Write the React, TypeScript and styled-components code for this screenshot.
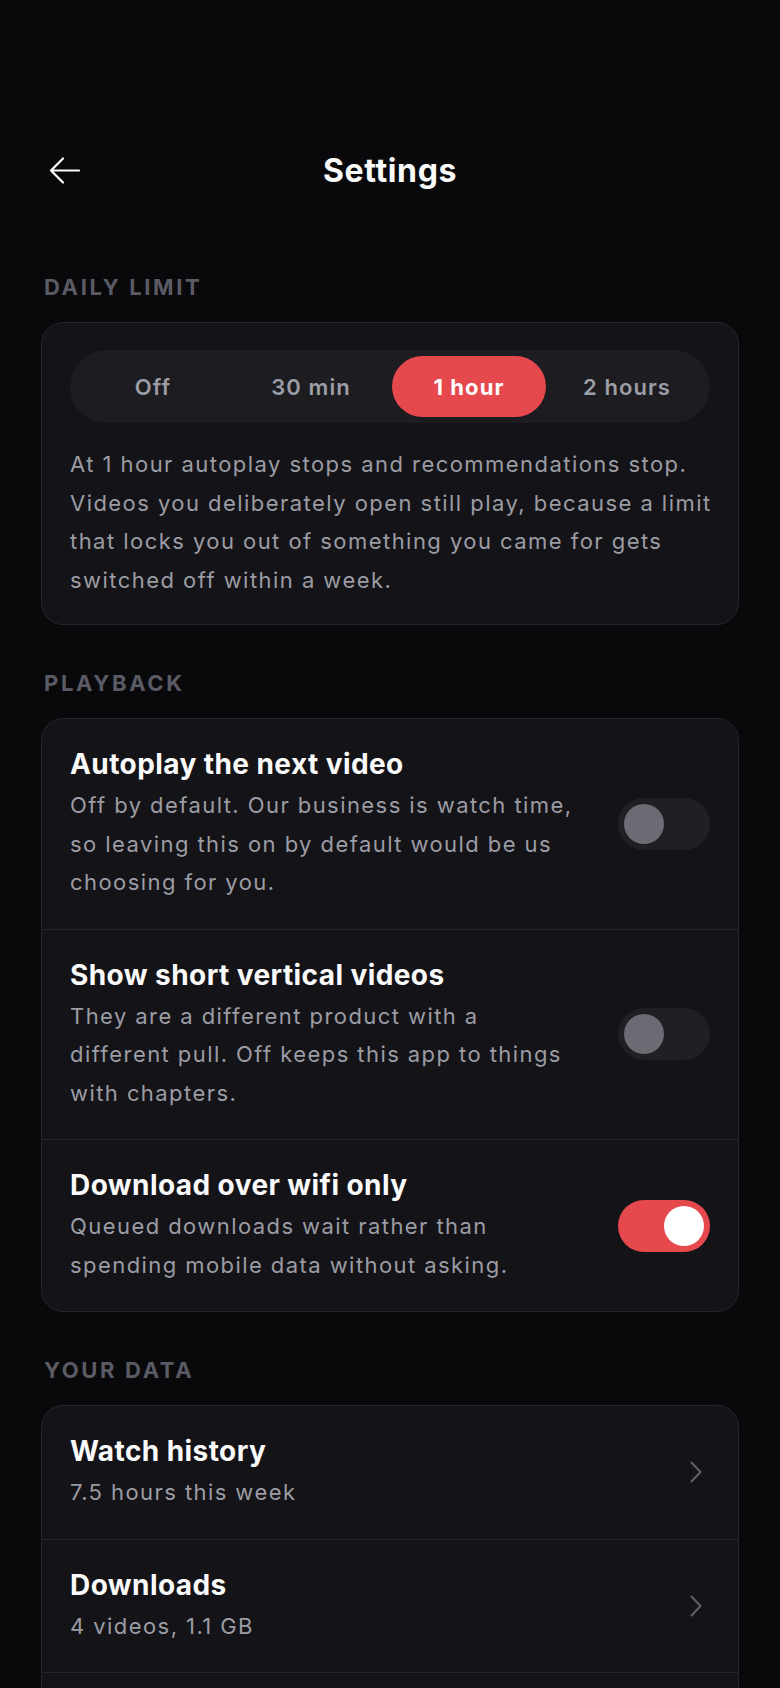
import React, { useState } from "react";
import styled, { createGlobalStyle } from "styled-components";

const GlobalStyle = createGlobalStyle`
  html, body {
    margin: 0;
    background: #09090b;
  }
  body {
    font-family: Inter, "Noto Sans", sans-serif;
    color: #fafafa;
    -webkit-font-smoothing: antialiased;
  }
  * { box-sizing: border-box; }
`;

const Page = styled.div`
  width: 780px;
  min-height: 1688px;
  padding: 140px 41px 40px;
`;

const Header = styled.header`
  display: grid;
  grid-template-columns: 1fr auto 1fr;
  align-items: center;
  height: 60px;
`;

const BackButton = styled.button`
  justify-self: start;
  display: flex;
  padding: 0 0 0 8px;
  background: none;
  border: none;
  color: #fafafa;
  cursor: pointer;
`;

const Title = styled.h1`
  margin: 0;
  font-size: 32px;
  font-weight: 700;
  letter-spacing: 0.02em;
`;

const Content = styled.main`
  display: flex;
  flex-direction: column;
  gap: 46px;
  margin-top: 75px;
`;

const Section = styled.section`
  display: flex;
  flex-direction: column;
  gap: 23px;
`;

const SectionLabel = styled.h2`
  margin: 0;
  padding-left: 3px;
  font-size: 22px;
  line-height: 24px;
  font-weight: 700;
  letter-spacing: 0.12em;
  color: #5b5b65;
`;

const Card = styled.div<{ $pad?: boolean }>`
  background: #141418;
  border: 1px solid #25252b;
  border-radius: 22px;
  overflow: hidden;
  padding: ${(p) => (p.$pad ? "27px 28px 25px" : "0")};
`;

const Segmented = styled.div`
  display: grid;
  grid-template-columns: repeat(4, 1fr);
  gap: 4px;
  padding: 6px;
  background: #1c1c21;
  border-radius: 999px;
`;

const Segment = styled.button<{ $active: boolean }>`
  height: 61px;
  border: none;
  border-radius: 999px;
  font-family: inherit;
  font-size: 22px;
  letter-spacing: 0.05em;
  font-weight: ${(p) => (p.$active ? 700 : 600)};
  color: ${(p) => (p.$active ? "#ffffff" : "#9d9da5")};
  background: ${(p) => (p.$active ? "#e5484d" : "transparent")};
  cursor: pointer;
`;

const Note = styled.p`
  margin: 22px -10px 0 0;
  font-size: 22px;
  line-height: 38.5px;
  letter-spacing: 0.066em;
  color: #9c9ca4;
`;

const Row = styled.div`
  display: flex;
  align-items: center;
  gap: 32px;
  padding: 27px 28px;
  & + & {
    border-top: 1px solid #25252b;
  }
`;

const RowText = styled.div`
  flex: 1;
  min-width: 0;
`;

const RowTitle = styled.div`
  font-size: 28px;
  line-height: 36px;
  font-weight: 700;
  letter-spacing: 0.015em;
  color: #fafafa;
`;

const RowDesc = styled.div`
  margin-top: 4px;
  font-size: 22px;
  line-height: 38.5px;
  letter-spacing: 0.065em;
  color: #9c9ca4;
`;

const Track = styled.button<{ $on: boolean }>`
  flex: none;
  display: flex;
  justify-content: ${(p) => (p.$on ? "flex-end" : "flex-start")};
  width: 92px;
  height: 52px;
  padding: 6px;
  border: none;
  border-radius: 999px;
  background: ${(p) => (p.$on ? "#e5484d" : "#1f1f24")};
  cursor: pointer;
`;

const Thumb = styled.span<{ $on: boolean }>`
  width: 40px;
  height: 40px;
  border-radius: 50%;
  background: ${(p) => (p.$on ? "#ffffff" : "#6b6b74")};
`;

const Chevron = styled.svg`
  flex: none;
  margin-right: 8px;
`;

const limits = ["Off", "30 min", "1 hour", "2 hours"];

const playback = [
  {
    title: "Autoplay the next video",
    desc: "Off by default. Our business is watch time, so leaving this on by default would be us choosing for you.",
    on: false,
  },
  {
    title: "Show short vertical videos",
    desc: "They are a different product with a different pull. Off keeps this app to things with chapters.",
    on: false,
  },
  {
    title: "Download over wifi only",
    desc: "Queued downloads wait rather than spending mobile data without asking.",
    on: true,
  },
];

const data = [
  { title: "Watch history", desc: "7.5 hours this week" },
  { title: "Downloads", desc: "4 videos, 1.1 GB" },
  { title: "Subscriptions", desc: "12 channels" },
];

const Toggle = ({ initial }: { initial: boolean }) => {
  const [on, setOn] = useState(initial);
  return (
    <Track $on={on} onClick={() => setOn(!on)} aria-pressed={on}>
      <Thumb $on={on} />
    </Track>
  );
};

export default function App() {
  const [limit, setLimit] = useState("1 hour");
  const note = `At ${limit} autoplay stops and recommendations stop. Videos you deliberately open still play, because a limit that locks you out of something you came for gets switched off within a week.`;

  return (
    <>
      <GlobalStyle />
      <Page>
        <Header>
          <BackButton aria-label="Back">
            <svg width="31" height="27" viewBox="0 0 31 27" fill="none">
              <path
                d="M30 13.5H2M14 1.5L2 13.5L14 25.5"
                stroke="currentColor"
                strokeWidth="2.2"
                strokeLinecap="round"
                strokeLinejoin="round"
              />
            </svg>
          </BackButton>
          <Title>Settings</Title>
        </Header>

        <Content>
          <Section>
            <SectionLabel>DAILY LIMIT</SectionLabel>
            <Card $pad>
              <Segmented>
                {limits.map((l) => (
                  <Segment key={l} $active={l === limit} onClick={() => setLimit(l)}>
                    {l}
                  </Segment>
                ))}
              </Segmented>
              <Note>{note}</Note>
            </Card>
          </Section>

          <Section>
            <SectionLabel>PLAYBACK</SectionLabel>
            <Card>
              {playback.map((item) => (
                <Row key={item.title}>
                  <RowText>
                    <RowTitle>{item.title}</RowTitle>
                    <RowDesc>{item.desc}</RowDesc>
                  </RowText>
                  <Toggle initial={item.on} />
                </Row>
              ))}
            </Card>
          </Section>

          <Section>
            <SectionLabel>YOUR DATA</SectionLabel>
            <Card>
              {data.map((item) => (
                <Row key={item.title}>
                  <RowText>
                    <RowTitle>{item.title}</RowTitle>
                    <RowDesc>{item.desc}</RowDesc>
                  </RowText>
                  <Chevron width="12" height="22" viewBox="0 0 12 22" fill="none">
                    <path
                      d="M1.5 1.5L10.5 11L1.5 20.5"
                      stroke="#5f5f68"
                      strokeWidth="2"
                      strokeLinecap="round"
                      strokeLinejoin="round"
                    />
                  </Chevron>
                </Row>
              ))}
            </Card>
          </Section>
        </Content>
      </Page>
    </>
  );
}
